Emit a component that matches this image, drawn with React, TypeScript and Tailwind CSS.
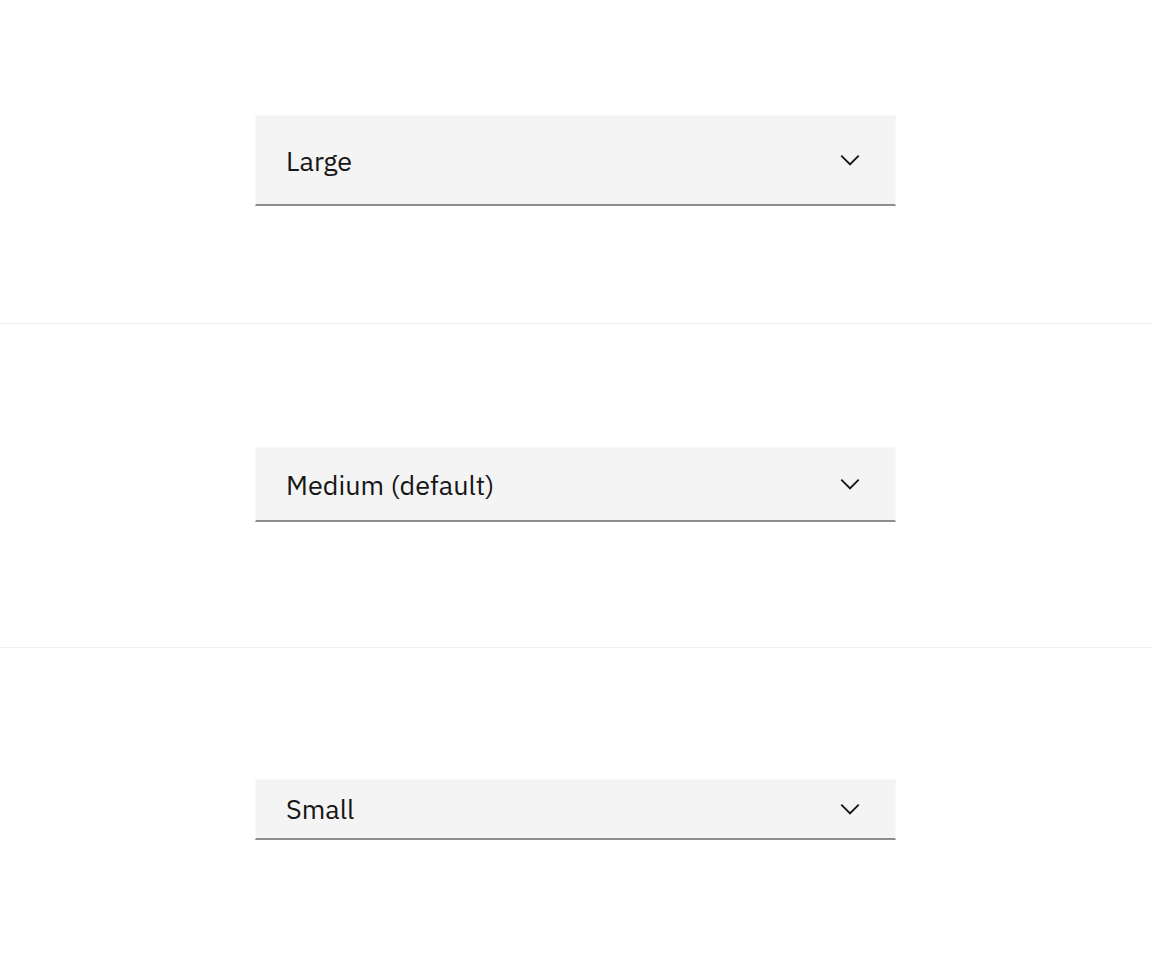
import React from 'react';

const sizes = [
  { label: 'Large', h: 'h-[91px]' },
  { label: 'Medium (default)', h: 'h-[75px]' },
  { label: 'Small', h: 'h-[61px]' },
];

const Chevron = () => (
  <svg width="30" height="30" viewBox="0 0 16 16" fill="#161616" aria-hidden>
    <path d="M8 11L3 6 3.7 5.3 8 9.6 12.3 5.3 13 6z" />
  </svg>
);

export default function App() {
  return (
    <div className="w-full bg-white" style={{ fontFamily: '"IBM Plex Sans", "Noto Sans", Roboto, sans-serif' }}>
      {sizes.map((s, i) => (
        <div
          key={s.label}
          className={`flex h-[324px] items-center justify-start pl-[255px] pb-[2px] ${i < 2 ? 'border-b border-[#f0f0f0]' : ''}`}
        >
          <button
            className={`flex w-[641px] ${s.h} items-center justify-between border border-[#f9f9f9] border-b-2 border-b-[#8d8d8d] bg-[#f4f4f4] pl-[30px] pr-[30px] text-left`}
          >
            <span className="text-[27px] leading-none text-[#161616]">{s.label}</span>
            <Chevron />
          </button>
        </div>
      ))}
    </div>
  );
}
